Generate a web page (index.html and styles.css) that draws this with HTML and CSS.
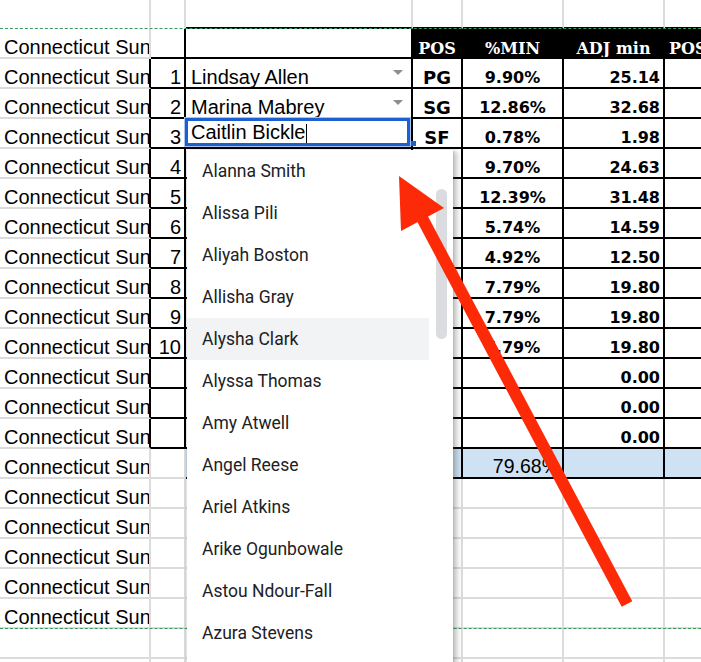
FILE: index.html
```html
<!DOCTYPE html>
<html>
<head>
<meta charset="utf-8">
<link rel="stylesheet" href="styles.css">
</head>
<body>
<div class="page">
  <div class="sheet">
    <!-- row 0 -->
    <div class="c nb"></div><div class="c nb"></div><div class="c kb"></div><div class="c kb"></div><div class="c kb"></div><div class="c kb"></div><div class="c kb"></div>
    <!-- header -->
    <div class="c team">Connecticut Sun</div><div class="c k"></div><div class="c k"></div><div class="c k hd">POS</div><div class="c k hd">%MIN</div><div class="c k hd">ADJ min</div><div class="c k hd hdl">POS</div>
    <!-- 1 -->
    <div class="c team kr">Connecticut Sun</div><div class="c k num">1</div><div class="c k name dd">Lindsay Allen</div><div class="c k pos code">PG</div><div class="c k pos">9.90%</div><div class="c k adj">25.14</div><div class="c k"></div>
    <!-- 2 -->
    <div class="c team kr">Connecticut Sun</div><div class="c k num">2</div><div class="c k name dd">Marina Mabrey</div><div class="c k pos code">SG</div><div class="c k pos">12.86%</div><div class="c k adj">32.68</div><div class="c k"></div>
    <!-- 3 -->
    <div class="c team kr">Connecticut Sun</div><div class="c k num">3</div><div class="c k name edit"><span>Caitlin Bickle</span><span class="caret"></span></div><div class="c k pos code">SF</div><div class="c k pos">0.78%</div><div class="c k adj">1.98</div><div class="c k"></div>
    <!-- 4 -->
    <div class="c team kr">Connecticut Sun</div><div class="c k num">4</div><div class="c k name"></div><div class="c k pos"></div><div class="c k pos">9.70%</div><div class="c k adj">24.63</div><div class="c k"></div>
    <!-- 5 -->
    <div class="c team kr">Connecticut Sun</div><div class="c k num">5</div><div class="c k name"></div><div class="c k pos"></div><div class="c k pos">12.39%</div><div class="c k adj">31.48</div><div class="c k"></div>
    <!-- 6 -->
    <div class="c team kr">Connecticut Sun</div><div class="c k num">6</div><div class="c k name"></div><div class="c k pos"></div><div class="c k pos">5.74%</div><div class="c k adj">14.59</div><div class="c k"></div>
    <!-- 7 -->
    <div class="c team kr">Connecticut Sun</div><div class="c k num">7</div><div class="c k name"></div><div class="c k pos"></div><div class="c k pos">4.92%</div><div class="c k adj">12.50</div><div class="c k"></div>
    <!-- 8 -->
    <div class="c team kr">Connecticut Sun</div><div class="c k num">8</div><div class="c k name"></div><div class="c k pos"></div><div class="c k pos">7.79%</div><div class="c k adj">19.80</div><div class="c k"></div>
    <!-- 9 -->
    <div class="c team kr">Connecticut Sun</div><div class="c k num">9</div><div class="c k name"></div><div class="c k pos"></div><div class="c k pos">7.79%</div><div class="c k adj">19.80</div><div class="c k"></div>
    <!-- 10 -->
    <div class="c team kr">Connecticut Sun</div><div class="c k num">10</div><div class="c k name"></div><div class="c k pos"></div><div class="c k pos">7.79%</div><div class="c k adj">19.80</div><div class="c k"></div>
    <!-- 11 -->
    <div class="c team kr">Connecticut Sun</div><div class="c k num"></div><div class="c k name"></div><div class="c k pos"></div><div class="c k pos"></div><div class="c k adj">0.00</div><div class="c k"></div>
    <!-- 12 -->
    <div class="c team kr">Connecticut Sun</div><div class="c k num"></div><div class="c k name"></div><div class="c k pos"></div><div class="c k pos"></div><div class="c k adj">0.00</div><div class="c k"></div>
    <!-- 13 -->
    <div class="c team kr">Connecticut Sun</div><div class="c k num"></div><div class="c k name"></div><div class="c k pos"></div><div class="c k pos"></div><div class="c k adj">0.00</div><div class="c k"></div>
    <!-- 14 total -->
    <div class="c team">Connecticut Sun</div><div class="c"></div><div class="c k blue"></div><div class="c k blue"></div><div class="c k blue tot">79.68%</div><div class="c k blue"></div><div class="c k blue"></div>
    <!-- 15-19 -->
    <div class="c team">Connecticut Sun</div><div class="c"></div><div class="c"></div><div class="c"></div><div class="c"></div><div class="c"></div><div class="c"></div>
    <div class="c team">Connecticut Sun</div><div class="c"></div><div class="c"></div><div class="c"></div><div class="c"></div><div class="c"></div><div class="c"></div>
    <div class="c team">Connecticut Sun</div><div class="c"></div><div class="c"></div><div class="c"></div><div class="c"></div><div class="c"></div><div class="c"></div>
    <div class="c team">Connecticut Sun</div><div class="c"></div><div class="c"></div><div class="c"></div><div class="c"></div><div class="c"></div><div class="c"></div>
    <div class="c team">Connecticut Sun</div><div class="c"></div><div class="c"></div><div class="c"></div><div class="c"></div><div class="c"></div><div class="c"></div>
    <!-- 20-21 -->
    <div class="c"></div><div class="c"></div><div class="c"></div><div class="c"></div><div class="c"></div><div class="c"></div><div class="c"></div>
    <div class="c"></div><div class="c"></div><div class="c"></div><div class="c"></div><div class="c"></div><div class="c"></div><div class="c"></div>
  </div>

  <div class="pagebreak pb-top"></div>
  <div class="pagebreak pb-bottom"></div>

  <div class="menu">
    <div class="list">
      <div class="opt">Alanna Smith</div>
      <div class="opt">Alissa Pili</div>
      <div class="opt">Aliyah Boston</div>
      <div class="opt">Allisha Gray</div>
      <div class="opt hl">Alysha Clark</div>
      <div class="opt">Alyssa Thomas</div>
      <div class="opt">Amy Atwell</div>
      <div class="opt">Angel Reese</div>
      <div class="opt">Ariel Atkins</div>
      <div class="opt">Arike Ogunbowale</div>
      <div class="opt">Astou Ndour-Fall</div>
      <div class="opt">Azura Stevens</div>
    </div>
    <div class="track"><div class="thumb"></div></div>
  </div>

  <svg class="arrow" width="701" height="662" viewBox="0 0 701 662">
    <line x1="421" y1="216" x2="627" y2="604" stroke="#fc2a07" stroke-width="12"/>
    <polygon points="399,176 444,208 401,231" fill="#fc2a07"/>
  </svg>
</div>
</body>
</html>
```

FILE: styles.css
```css
html, body {
  margin: 0;
  padding: 0;
  background: #fff;
  overflow: hidden;
}
body {
  font-family: "Liberation Sans", Arial, sans-serif;
}
.page {
  position: relative;
  width: 701px;
  height: 662px;
  overflow: hidden;
}
.sheet {
  display: grid;
  grid-template-columns: 151px 35px 227px 50px 101px 101px 101px;
  grid-template-rows: 29px repeat(22, 30px);
  width: 766px;
}
.c {
  box-sizing: border-box;
  border-right: 2px solid #dcdcdc;
  border-bottom: 2px solid #dcdcdc;
  display: flex;
  align-items: flex-end;
  overflow: hidden;
  white-space: nowrap;
  font-size: 20px;
  line-height: 20px;
  color: #000;
}
.nb { border-bottom-color: transparent; }
.kr { border-right-color: #000; }
.kb { border-bottom-color: #000; }
.k { border-right-color: #000; border-bottom-color: #000; }
.team { padding-left: 4px; }
.num { justify-content: flex-end; padding-right: 3px; }
.name { padding-left: 5px; }
.hd {
  background: #000;
  color: #fff;
  font-family: "DejaVu Serif", serif;
  font-weight: bold;
  font-size: 16px;
  line-height: 17px;
  justify-content: center;
}
.hdl { justify-content: flex-start; padding-left: 4px; }
.pos {
  font-family: "DejaVu Sans", sans-serif;
  font-weight: bold;
  font-size: 16px;
  line-height: 19px;
  justify-content: center;
}
.code {
  font-size: 18px;
  line-height: 19px;
}
.adj {
  font-family: "DejaVu Sans", sans-serif;
  font-weight: bold;
  font-size: 16px;
  line-height: 19px;
  justify-content: flex-end;
  padding-right: 3px;
}
.blue { background: #cfe2f3; }
.tot {
  justify-content: flex-end;
  padding-right: 3px;
  font-size: 19.5px;
  line-height: 22px;
}
.dd::after {
  content: "";
  margin-left: auto;
  margin-right: 8px;
  align-self: flex-start;
  margin-top: 11px;
  border-left: 5px solid transparent;
  border-right: 5px solid transparent;
  border-top: 5px solid #8e8e8e;
}
.edit {
  position: relative;
  overflow: visible;
  align-items: flex-start;
  padding-top: 4px;
  line-height: 19px;
}
.edit::before {
  content: "";
  position: absolute;
  left: -1px;
  top: -1px;
  right: 1px;
  bottom: 1px;
  border: 3px solid #1b5fd0;
  box-shadow: 0 0 0 1px #a9c4ee;
}
.edit::after {
  content: "";
  position: absolute;
  right: -5px;
  bottom: 1px;
  width: 5px;
  height: 5px;
  background: #1b5fd0;
}
.caret {
  width: 1px;
  height: 19px;
  background: #000;
  margin: 1px 0 0 1px;
}
.pagebreak {
  position: absolute;
  left: 0;
  right: 0;
  height: 0;
  border-top: 1px dashed #3a9a5b;
}
.pb-top { top: 28px; }
.pb-bottom { top: 628px; }
.menu {
  position: absolute;
  left: 187px;
  top: 150px;
  width: 266px;
  height: 560px;
  background: #fff;
  display: flex;
  box-shadow: 0 1px 2px rgba(60, 64, 67, 0.3), 3px 2px 5px 1px rgba(60, 64, 67, 0.3);
}
.list {
  width: 242px;
}
.opt {
  height: 42px;
  line-height: 42px;
  padding-left: 15px;
  font-family: Roboto, "Liberation Sans", sans-serif;
  font-size: 17.5px;
  color: #202124;
}
.opt.hl { background: #f1f3f4; }
.track {
  flex: 1;
  padding-top: 39px;
  padding-left: 7px;
}
.thumb {
  width: 11px;
  height: 150px;
  border-radius: 6px;
  background: #dadce0;
}
.arrow {
  position: absolute;
  left: 0;
  top: 0;
}
```
